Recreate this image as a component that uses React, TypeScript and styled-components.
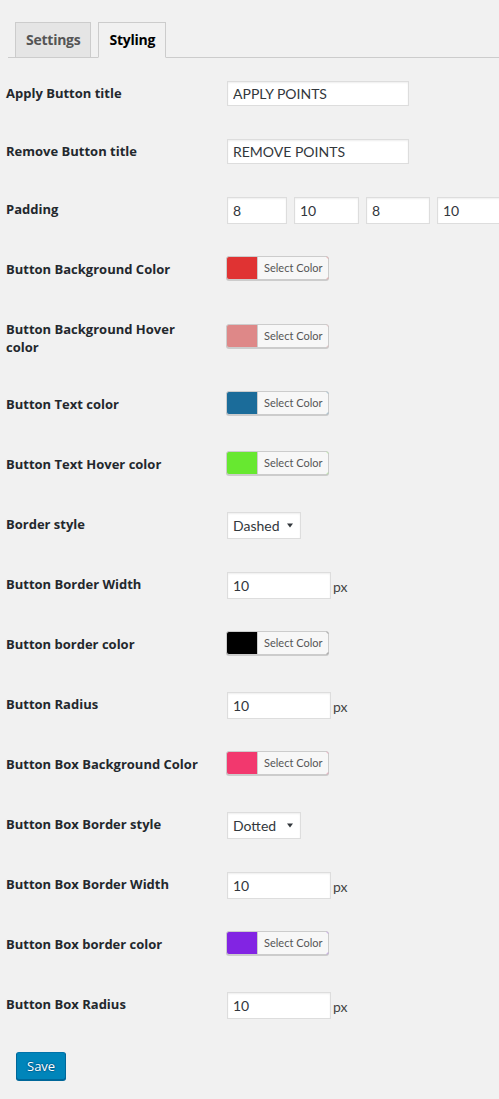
import React from "react";
import styled, { createGlobalStyle } from "styled-components";

const GlobalStyle = createGlobalStyle`
  html, body {
    margin: 0;
    padding: 0;
    background: #f1f1f1;
    overflow-x: hidden;
  }
  body {
    font-family: Lato, "Open Sans", "DejaVu Sans", sans-serif;
    color: #444;
  }
`;

const Page = styled.div`
  width: 499px;
  overflow: hidden;
  padding-top: 22px;
  padding-bottom: 18px;
`;

const TabBar = styled.nav`
  display: flex;
  align-items: flex-end;
  gap: 7px;
  margin-left: 8px;
  padding-left: 7px;
  border-bottom: 1px solid #ccc;
`;

const Tab = styled.a<{ $active?: boolean }>`
  display: block;
  margin-bottom: -1px;
  padding: 5px 10px;
  font-family: "Open Sans", sans-serif;
  font-size: 14px;
  line-height: 24px;
  font-weight: 700;
  letter-spacing: -0.25px;
  text-decoration: none;
  color: ${(p) => (p.$active ? "#000" : "#555")};
  background: ${(p) => (p.$active ? "#f1f1f1" : "#e5e5e5")};
  border: 1px solid #ccc;
  border-bottom-color: ${(p) => (p.$active ? "#f1f1f1" : "#ccc")};
`;

const Form = styled.form`
  margin-top: 7px;
  padding-left: 6px;
`;

const Row = styled.div`
  display: grid;
  grid-template-columns: 210px 1fr;
`;

const Label = styled.label`
  align-self: start;
  padding: 20px 10px 20px 0;
  font-family: "Open Sans", sans-serif;
  font-size: 13px;
  line-height: 17.5px;
  font-weight: 700;
  color: #23282d;
`;

const Cell = styled.div`
  align-self: center;
  display: flex;
  align-items: center;
  padding: 15px 10px;
  white-space: nowrap;
`;

const PaddingGroup = styled.div`
  display: flex;
  gap: 6px;
`;

const Field = styled.input<{ $w: number; $h?: number }>`
  box-sizing: border-box;
  display: block;
  flex: none;
  width: ${(p) => p.$w}px;
  height: ${(p) => p.$h ?? 27}px;
  margin: 1px 0 2px 1px;
  padding: 0 5px;
  border: 1px solid #ddd;
  box-shadow: inset 0 1px 2px rgba(0, 0, 0, 0.07);
  background: #fff;
  color: #32373c;
  font-family: inherit;
  font-size: 14px;
  outline: none;
`;

const Unit = styled.span`
  margin-left: 2px;
  font-size: 14px;
  color: #444;
`;

const ColorButton = styled.button<{ $color: string }>`
  display: flex;
  align-items: stretch;
  height: 24px;
  margin: 0 0 6px 0;
  padding: 0 0 0 30px;
  border: 1px solid #ccc;
  border-radius: 3px;
  box-shadow: 0 1px 0 #ccc;
  background: ${(p) => p.$color};
  overflow: hidden;
  cursor: pointer;
  font-family: inherit;
`;

const ColorText = styled.span`
  display: block;
  padding: 0 6px;
  border-left: 1px solid #ccc;
  background: #f7f7f7;
  color: #555;
  font-size: 11px;
  line-height: 22px;
`;

const SelectBox = styled.div`
  box-sizing: border-box;
  display: flex;
  align-items: center;
  width: 74px;
  height: 27px;
  margin: 1px 0 2px 1px;
  padding: 0 7px 0 0;
  border: 1px solid #ddd;
  box-shadow: inset 0 1px 2px rgba(0, 0, 0, 0.07);
  background: #fff;
`;

const NativeSelect = styled.select`
  flex: 1;
  min-width: 0;
  appearance: none;
  -webkit-appearance: none;
  border: none;
  background: transparent;
  padding: 0 0 0 5px;
  height: 25px;
  color: #32373c;
  font-family: inherit;
  font-size: 14px;
  outline: none;
`;

const Caret = styled.svg`
  flex: none;
  width: 6px;
  height: 5px;
  pointer-events: none;
`;

const SubmitBar = styled.div`
  padding: 16px 0 0 10px;
`;

const SaveButton = styled.button`
  height: 28px;
  padding: 0 10px 1px;
  border: 1px solid #0073aa;
  border-color: #0073aa #006799 #006799;
  border-radius: 3px;
  background: #0085ba;
  box-shadow: 0 1px 0 #006799;
  color: #fff;
  font-family: "Open Sans", sans-serif;
  font-size: 13px;
  line-height: 26px;
  text-shadow: 0 -1px 1px #006799, 1px 0 1px #006799, 0 1px 1px #006799, -1px 0 1px #006799;
  cursor: pointer;
`;

type Item =
  | { kind: "text"; label: string; value: string }
  | { kind: "padding"; label: string; values: string[] }
  | { kind: "color"; label: string; color: string }
  | { kind: "select"; label: string; value: string }
  | { kind: "px"; label: string; value: string };

const items: Item[] = [
  { kind: "text", label: "Apply Button title", value: "APPLY POINTS" },
  { kind: "text", label: "Remove Button title", value: "REMOVE POINTS" },
  { kind: "padding", label: "Padding", values: ["8", "10", "8", "10"] },
  { kind: "color", label: "Button Background Color", color: "#e03333" },
  { kind: "color", label: "Button Background Hover color", color: "#de8888" },
  { kind: "color", label: "Button Text color", color: "#1b6c9a" },
  { kind: "color", label: "Button Text Hover color", color: "#67e830" },
  { kind: "select", label: "Border style", value: "Dashed" },
  { kind: "px", label: "Button Border Width", value: "10" },
  { kind: "color", label: "Button border color", color: "#000000" },
  { kind: "px", label: "Button Radius", value: "10" },
  { kind: "color", label: "Button Box Background Color", color: "#f2386e" },
  { kind: "select", label: "Button Box Border style", value: "Dotted" },
  { kind: "px", label: "Button Box Border Width", value: "10" },
  { kind: "color", label: "Button Box border color", color: "#8224e3" },
  { kind: "px", label: "Button Box Radius", value: "10" },
];

const paddingWidths = [60, 65, 64, 64];

function Control({ item }: { item: Item }) {
  switch (item.kind) {
    case "text":
      return <Field type="text" $w={182} $h={25} defaultValue={item.value} />;
    case "padding":
      return (
        <PaddingGroup>
          {item.values.map((v, i) => (
            <Field key={i} type="text" $w={paddingWidths[i]} defaultValue={v} />
          ))}
        </PaddingGroup>
      );
    case "color":
      return (
        <ColorButton type="button" $color={item.color}>
          <ColorText>Select Color</ColorText>
        </ColorButton>
      );
    case "select":
      return (
        <SelectBox>
          <NativeSelect defaultValue={item.value}>
            <option>Solid</option>
            <option>Dashed</option>
            <option>Dotted</option>
            <option>Double</option>
          </NativeSelect>
          <Caret viewBox="0 0 6 5">
            <path d="M0 0.5 H6 L3 4.5 Z" fill="#32373c" />
          </Caret>
        </SelectBox>
      );
    case "px":
      return (
        <>
          <Field type="text" $w={104} defaultValue={item.value} />
          <Unit>px</Unit>
        </>
      );
  }
}

export default function App() {
  return (
    <>
      <GlobalStyle />
      <Page>
        <TabBar>
          <Tab href="#settings">Settings</Tab>
          <Tab href="#styling" $active>
            Styling
          </Tab>
        </TabBar>
        <Form onSubmit={(e) => e.preventDefault()}>
          {items.map((item) => (
            <Row key={item.label}>
              <Label>{item.label}</Label>
              <Cell>
                <Control item={item} />
              </Cell>
            </Row>
          ))}
          <SubmitBar>
            <SaveButton type="submit">Save</SaveButton>
          </SubmitBar>
        </Form>
      </Page>
    </>
  );
}
